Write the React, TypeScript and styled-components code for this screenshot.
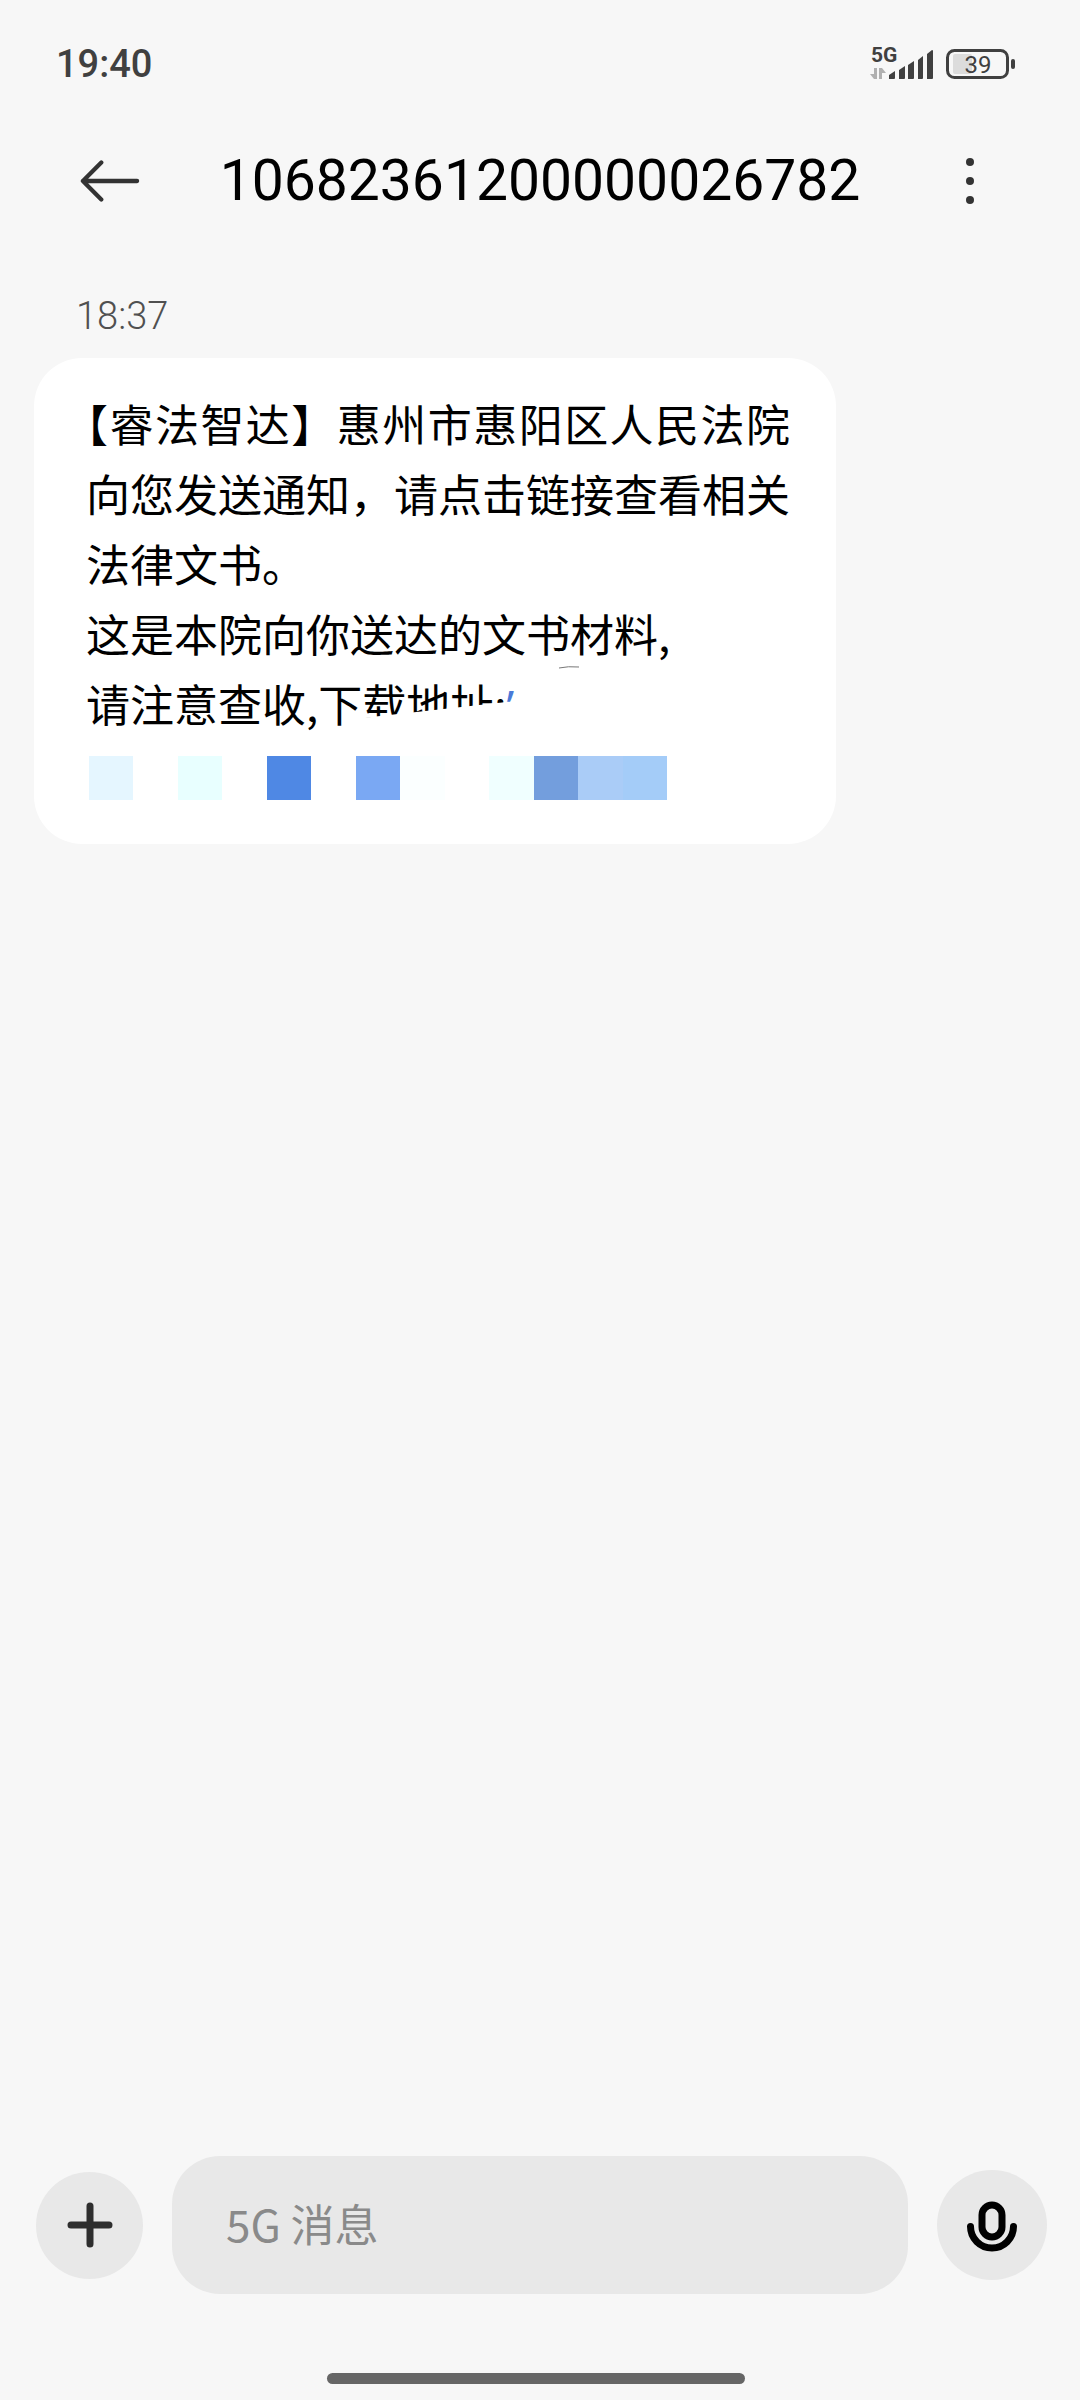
import React from "react";
import styled, { createGlobalStyle } from "styled-components";

const LATIN = `Roboto, "Noto Sans CJK SC", sans-serif`;
const HAN = `"Noto Sans CJK SC", "Noto Sans", sans-serif`;

const GlobalStyle = createGlobalStyle`
  *, *::before, *::after { box-sizing: border-box; }
  body { margin: 0; background: #f7f7f7; }
  svg { display: block; }
`;

const Screen = styled.div`
  display: flex;
  flex-direction: column;
  min-height: 100vh;
  background: #f7f7f7;
  color: #000;
  font-family: ${LATIN};
`;

const StatusBar = styled.div`
  display: flex;
  align-items: center;
  justify-content: space-between;
  height: 128px;
  padding: 0 64px 0 56px;
  color: #404040;
`;

const Clock = styled.time`
  font-size: 38px;
  line-height: 48px;
  font-weight: 500;
`;

const StatusIcons = styled.div`
  display: flex;
  align-items: center;
  gap: 13px;
`;

const Header = styled.header`
  display: flex;
  align-items: center;
  justify-content: space-between;
  height: 106px;
  padding: 0 80px;
`;

const IconButton = styled.button`
  display: flex;
  align-items: center;
  justify-content: center;
  width: 60px;
  height: 60px;
  padding: 0;
  border: 0;
  background: none;
  color: #333;
`;

const Title = styled.h1`
  margin: 0;
  font-size: 57px;
  line-height: 72px;
  font-weight: 400;
`;

const Thread = styled.main`
  flex: 1;
  padding: 58px 34px 0;
`;

const SentAt = styled.time`
  display: block;
  padding: 0 42px;
  font-size: 38px;
  line-height: 48px;
  font-weight: 300;
  color: #505050;
`;

const Bubble = styled.article`
  position: relative;
  width: 802px;
  max-width: 100%;
  margin-top: 18px;
  padding: 30px 46px 44px 52px;
  border-radius: 48px;
  background: #fff;
`;

const Message = styled.p`
  margin: 0;
  font-family: ${HAN};
  font-size: 44px;
  line-height: 70px;
  text-align: justify;
  text-spacing-trim: trim-start;
`;

const Smeared = styled.span`
  display: inline-block;
  clip-path: polygon(0 0, 100% 0, 100% 34px, 0 50px);
`;

const LinkStub = styled.a`
  color: #4a7ad8;
  font-family: "Noto Sans", sans-serif;
  line-height: 1;
  text-decoration: none;
`;

const StrayStroke = styled.svg`
  position: absolute;
  left: 524px;
  top: 307px;
`;

const Mosaic = styled.div`
  display: grid;
  grid-template-columns: repeat(13, 1fr);
  width: 578px;
  max-width: 100%;
  height: 44px;
  margin: 18px 0 0 3px;
`;

const Tile = styled.span<{ $tone: string }>`
  background: ${(p) => p.$tone};
`;

const Composer = styled.form`
  display: flex;
  align-items: center;
  gap: 29px;
  padding: 0 33px 0 36px;
`;

const RoundButton = styled.button<{ $size: number }>`
  display: flex;
  align-items: center;
  justify-content: center;
  flex: none;
  width: ${(p) => p.$size}px;
  height: ${(p) => p.$size}px;
  padding: 0;
  border: 0;
  border-radius: 50%;
  background: #e8e8e8;
  color: #000;
`;

const Field = styled.input`
  flex: 1;
  min-width: 0;
  height: 138px;
  padding: 0 54px 4px;
  border: 0;
  border-radius: 48px;
  outline: 0;
  background: #e8e8e8;
  color: #000;
  font-family: ${HAN};
  font-size: 44px;

  &::placeholder {
    color: #8a8a8a;
    opacity: 1;
  }
`;

const HomeArea = styled.footer`
  display: flex;
  justify-content: center;
  padding: 79px 8px 16px 0;
`;

const HomeBar = styled.div`
  width: 418px;
  height: 11px;
  border-radius: 6px;
  background: #666;
`;

const TILES = [
  "#e5f6ff", "#fff", "#e8ffff", "#fff", "#4f88e4", "#fff", "#7aa8f3",
  "#fbffff", "#fff", "#f0ffff", "#739edd", "#aaccf7", "#a4ccf8",
];

function SignalIcon() {
  return (
    <svg width="64" height="44" viewBox="0 0 64 44" fill="currentColor" role="img" aria-label="5G">
      <text x="2" y="20" fontFamily="Roboto, sans-serif" fontSize="21" fontWeight="700">5G</text>
      <g fill="#b0b0b0">
        <path d="M5 26h3v11H5l-4-5h4z" />
        <path d="M10 37V26h3l4 5h-4v6z" />
      </g>
      <path d="M20 37v-4l6-4v7q0 1-1 1z" />
      <path d="M30 37V28l6-4v12q0 1-1 1z" />
      <path d="M39 37V23l6-4v17q0 1-1 1z" />
      <path d="M49 37V18l5-4v22q0 1-1 1z" />
      <path d="M58 37V12l5-4q1 0 1 1v27q0 1-1 1z" />
    </svg>
  );
}

function BatteryIcon() {
  return (
    <svg width="70" height="30" viewBox="0 0 70 30" role="img" aria-label="39%">
      <rect x="7" y="5" width="19" height="20" rx="2" fill="#dcdcdc" />
      <rect x="1.5" y="1.5" width="60" height="27" rx="7" fill="none" stroke="currentColor" strokeWidth="3" />
      <rect x="65" y="10" width="4" height="10" rx="2" fill="currentColor" />
      <text x="32" y="24" textAnchor="middle" fontFamily="Roboto, sans-serif" fontSize="24" fill="currentColor">39</text>
    </svg>
  );
}

export default function App() {
  return (
    <>
      <GlobalStyle />
      <Screen>
        <StatusBar>
          <Clock>19:40</Clock>
          <StatusIcons>
            <SignalIcon />
            <BatteryIcon />
          </StatusIcons>
        </StatusBar>

        <Header>
          <IconButton type="button" aria-label="返回">
            <svg width="62" height="44" viewBox="0 0 62 44" fill="none" stroke="currentColor" strokeWidth="4.400" strokeLinecap="round" strokeLinejoin="round">
              <path d="M59 22H3M22 3L3 22l19 19" />
            </svg>
          </IconButton>
          <Title>10682361200000026782</Title>
          <IconButton type="button" aria-label="更多">
            <svg width="8" height="46" viewBox="0 0 8 46" fill="currentColor">
              <circle cx="4" cy="4" r="4" />
              <circle cx="4" cy="23" r="4" />
              <circle cx="4" cy="42" r="4" />
            </svg>
          </IconButton>
        </Header>

        <Thread>
          <SentAt>18:37</SentAt>
          <Bubble>
            <Message>
              【睿法智达】惠州市惠阳区人民法院向您发送通知，请点击链接查看相关法律文书。
              <br />
              这是本院向你送达的文书材料,
              <br />
              请注意查收,下<Smeared>载地址:</Smeared>
              <LinkStub href="#">’</LinkStub>
            </Message>
            <StrayStroke width="22" height="4" viewBox="0 0 22 4" fill="none" stroke="#777" strokeWidth="1">
              <path d="M1 3Q10 1 21 2" />
            </StrayStroke>
            <Mosaic>
              {TILES.map((tone, i) => (
                <Tile key={i} $tone={tone} />
              ))}
            </Mosaic>
          </Bubble>
        </Thread>

        <Composer>
          <RoundButton type="button" aria-label="添加" $size={107}>
            <svg width="46" height="46" viewBox="0 0 46 46" fill="none" stroke="#2e2e2e" strokeWidth="7" strokeLinecap="round">
              <path d="M23 4v38M4 23h38" />
            </svg>
          </RoundButton>
          <Field type="text" aria-label="5G 消息" placeholder="5G 消息" />
          <RoundButton type="button" aria-label="语音" $size={110}>
            <svg width="50" height="54" viewBox="0 0 50 54" fill="none" stroke="currentColor" strokeWidth="7" strokeLinecap="round">
              <rect x="15" y="7" width="20" height="32" rx="10" />
              <path d="M3.500 28.500a21.500 21.500 0 0 0 43 0" />
            </svg>
          </RoundButton>
        </Composer>

        <HomeArea>
          <HomeBar />
        </HomeArea>
      </Screen>
    </>
  );
}
